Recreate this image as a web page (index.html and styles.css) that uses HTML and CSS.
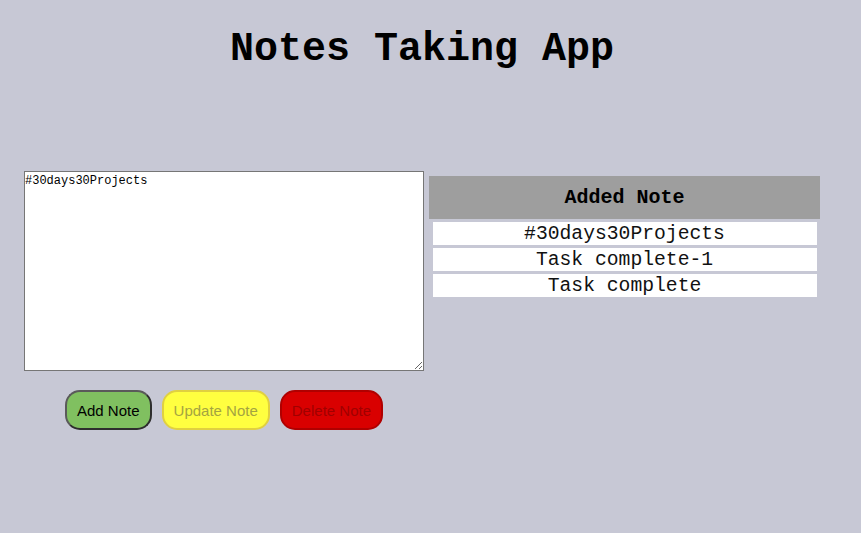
FILE: index.html
```html
<!DOCTYPE html>
<html>
<head>
<meta charset="utf-8">
<link rel="stylesheet" href="styles.css">
</head>
<body>
<div class="app">
  <h1 class="title">Notes Taking App</h1>
  <div class="main">
    <div class="editor">
      <textarea class="note-input" spellcheck="false">#30days30Projects</textarea>
      <div class="buttons">
        <button class="btn btn-add">Add Note</button>
        <button class="btn btn-update">Update Note</button>
        <button class="btn btn-delete">Delete Note</button>
      </div>
    </div>
    <div class="notes">
      <div class="notes-head">Added Note</div>
      <div class="note-row">#30days30Projects</div>
      <div class="note-row">Task complete-1</div>
      <div class="note-row">Task complete</div>
    </div>
  </div>
</div>
</body>
</html>
```

FILE: styles.css
```css
html, body {
  margin: 0;
  padding: 0;
  background: #c7c8d5;
  height: 100%;
}
.app {
  width: 796px;
  padding-left: 24px;
  padding-top: 27px;
}
.title {
  margin: 0;
  text-align: center;
  font-family: "Liberation Mono", "Courier New", monospace;
  font-weight: bold;
  font-size: 40px;
  line-height: 45px;
  color: #000;
}
.main {
  display: flex;
  align-items: flex-start;
  gap: 5px;
  margin-top: 99px;
}
.editor {
  display: flex;
  flex-direction: column;
  align-items: center;
  width: 400px;
}
.note-input {
  box-sizing: border-box;
  width: 400px;
  height: 200px;
  margin: 0;
  padding: 2px 0 0 0;
  border: 1px solid #767676;
  background: #fff;
  font-family: "Liberation Mono", "DejaVu Sans Mono", monospace;
  font-size: 12px;
  color: #000;
  resize: both;
}
.buttons {
  display: flex;
  gap: 10px;
  margin-top: 19px;
}
.btn {
  box-sizing: border-box;
  height: 40px;
  padding: 0 10px;
  border-radius: 15px;
  border: 2px solid;
  font-family: "Liberation Sans", Arial, sans-serif;
  font-size: 15px;
}
.btn-add {
  background: #80c060;
  border-color: #5a5a5a #2e2e2e #2e2e2e #5a5a5a;
  color: #000;
}
.btn-update {
  background: #ffff40;
  border-color: #e0d040;
  color: #a4a440;
}
.btn-delete {
  background: #d90000;
  border-color: #b00000;
  color: #a00000;
}
.notes {
  width: 391px;
  margin-top: 5px;
  display: flex;
  flex-direction: column;
  align-items: center;
  gap: 3px;
  font-family: "Liberation Mono", "Courier New", monospace;
  color: #000;
}
.notes-head {
  align-self: stretch;
  height: 43px;
  line-height: 43px;
  text-align: center;
  background: #9e9e9e;
  font-weight: bold;
  font-size: 20px;
}
.note-row {
  box-sizing: border-box;
  width: 384px;
  height: 23px;
  padding-top: 2px;
  line-height: 21px;
  background: #fff;
  text-align: center;
  font-size: 19.7px;
  color: #111;
}
```
